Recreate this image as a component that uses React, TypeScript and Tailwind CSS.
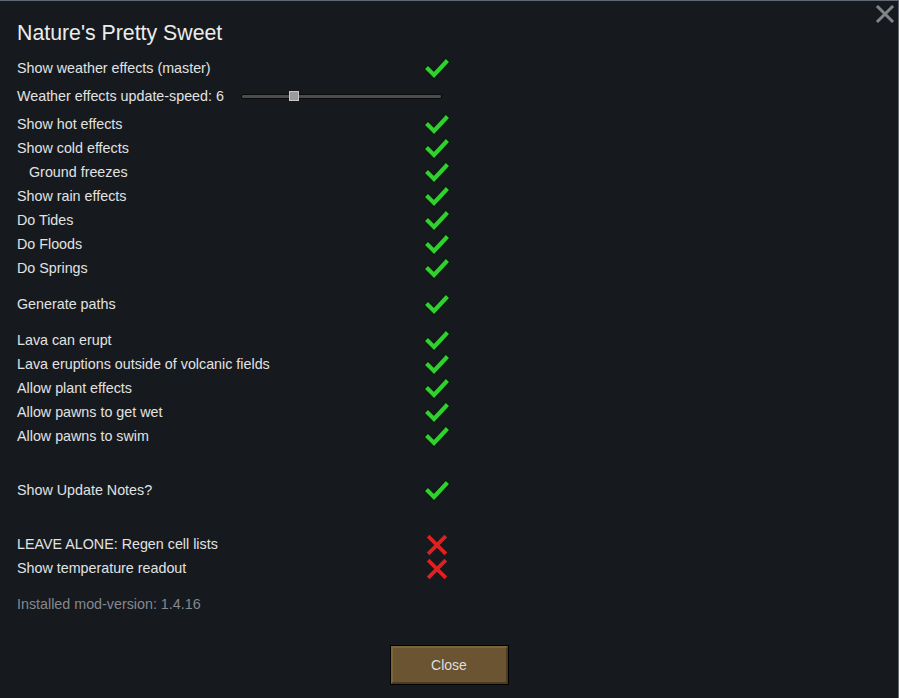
import React from "react";

const Check = () => (
  <svg width="26" height="22" viewBox="0 0 26 22" className="block translate-y-[1px]">
    <polyline points="4,11 10,17 22,4" fill="none" stroke="#0b1a0b" strokeWidth="6.5" strokeLinecap="square" strokeLinejoin="miter" />
    <polyline points="4,11 10,17 22,4" fill="none" stroke="#2fd12f" strokeWidth="4.2" strokeLinecap="square" strokeLinejoin="miter" />
  </svg>
);

const Cross = () => (
  <svg width="26" height="22" viewBox="0 0 26 22" className="block translate-y-[1px]">
    <g stroke="#e0211f" strokeWidth="3.8" strokeLinecap="square">
      <line x1="5.5" y1="3.5" x2="20.5" y2="18.5" />
      <line x1="20.5" y1="3.5" x2="5.5" y2="18.5" />
    </g>
  </svg>
);

type RowProps = { label: string; on?: boolean; indent?: boolean; className?: string };

const Row = ({ label, on = true, indent = false, className = "" }: RowProps) => (
  <div className={`flex h-6 items-center ${className}`}>
    <div className={`w-[407px] text-[14.3px] leading-none text-[#e2e2e2] ${indent ? "pl-3" : ""}`}>{label}</div>
    <div className="flex w-[26px] items-center justify-center">{on ? <Check /> : <Cross />}</div>
  </div>
);

export default function App() {
  return (
    <div
      className="relative h-[698px] w-[899px] overflow-hidden border-t border-r border-[#5f6873] bg-[#161a1f]"
      style={{ fontFamily: '"Liberation Sans", Arial, sans-serif' }}
    >
      <button className="absolute right-[3px] top-[3px] flex h-5 w-5 items-center justify-center">
        <svg width="20" height="20" viewBox="0 0 20 20">
          <g stroke="#80858b" strokeWidth="3" strokeLinecap="square">
            <line x1="3" y1="3" x2="17" y2="17" />
            <line x1="17" y1="3" x2="3" y2="17" />
          </g>
        </svg>
      </button>

      <div className="flex flex-col pl-[17px] pt-[18px]">
        <div className="h-[28px] text-[21.3px] leading-[28px] text-[#ececec]">Nature's Pretty Sweet</div>
        <div className="mt-[9px] flex flex-col">
          <Row label="Show weather effects (master)" />
          <div className="flex h-8 items-center">
            <div className="w-[224px] text-[14.3px] leading-none text-[#e2e2e2]">Weather effects update-speed: 6</div>
            <div className="relative h-[5px] w-[201px] rounded-[2px] border border-[#0a0a0a] bg-[#4b4c4e]">
              <div className="absolute left-[47px] top-[-4px] h-[10px] w-[10px] border border-[#c8c8c8] bg-[#9a9a9a]" />
            </div>
          </div>
          <Row label="Show hot effects" />
          <Row label="Show cold effects" />
          <Row label="Ground freezes" indent />
          <Row label="Show rain effects" />
          <Row label="Do Tides" />
          <Row label="Do Floods" />
          <Row label="Do Springs" />
          <Row label="Generate paths" className="mt-3" />
          <Row label="Lava can erupt" className="mt-3" />
          <Row label="Lava eruptions outside of volcanic fields" />
          <Row label="Allow plant effects" />
          <Row label="Allow pawns to get wet" />
          <Row label="Allow pawns to swim" />
          <Row label="Show Update Notes?" className="mt-[30px]" />
          <Row label="LEAVE ALONE: Regen cell lists" on={false} className="mt-[30px]" />
          <Row label="Show temperature readout" on={false} />
          <div className="mt-3 flex h-6 items-center text-[14.3px] leading-none text-[#85888c]">Installed mod-version: 1.4.16</div>
        </div>
      </div>

      <div className="mt-[29px] flex justify-center">
        <div className="border border-black">
          <div className="flex h-[38px] w-[117px] items-center justify-center border-[2px] border-t-[#7e6538] border-l-[#7e6538] border-r-[#4b3a1f] border-b-[#4b3a1f] bg-[#6b5431] text-[14px] text-[#dedede]">
            Close
          </div>
        </div>
      </div>
    </div>
  );
}
